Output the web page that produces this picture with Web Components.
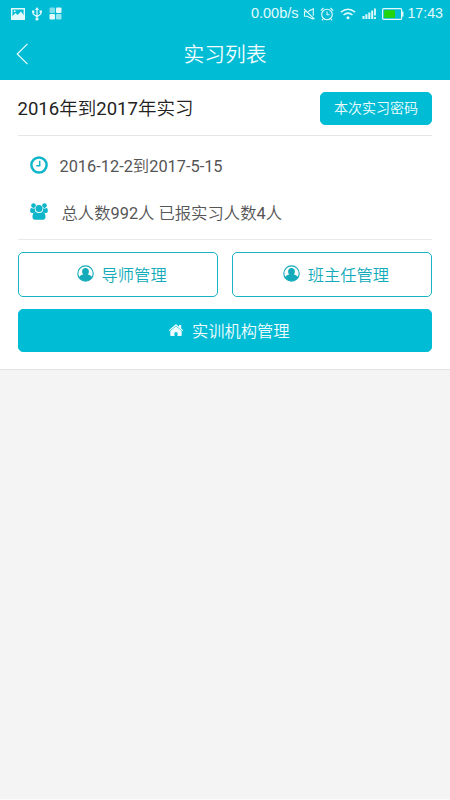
<!DOCTYPE html>
<html lang="zh-CN">
<head>
<meta charset="utf-8">
<title>实习列表</title>
<style>
html,body{margin:0;height:100%}
body{background:#f4f4f4;font-family:Roboto,"Noto Sans CJK SC",sans-serif;font-weight:350;overflow:hidden}
</style>
</head>
<body>
<internship-page></internship-page>
<script>
const define = (name, html) => customElements.define(name, class extends HTMLElement {
  constructor() {
    super();
    const t = document.createElement('template');
    t.innerHTML = html;
    this.attachShadow({mode: 'open'}).append(t.content.cloneNode(true));
  }
});

const icons = {
  clock: '<svg viewBox="0 0 18 18" width="18" height="18" fill="none" stroke="currentColor"><circle cx="9" cy="9" r="7.600" stroke-width="2.500"/><path d="M9.700 4.800V9.700H6.200" stroke-width="1.500"/></svg>',
  group: '<svg viewBox="0 0 18 17" width="18" height="17" fill="currentColor"><circle cx="3.500" cy="2.600" r="2.300"/><circle cx="14.500" cy="2.600" r="2.300"/><path d="M.2 8.200c0-2 .2-3.200 1.500-3.200 1 .7 2.300.8 3.300.2-.3 1.800 0 2.900.9 3.900-1 .1-1.800.4-2.400 1C1.400 10.100.2 9.600.2 8.200ZM17.800 8.200c0-2-.2-3.200-1.500-3.200-1 .7-2.300.8-3.300.2.3 1.800 0 2.900-.9 3.900 1 .1 1.800.4 2.400 1 2.100 0 3.300-.5 3.300-1.900Z"/><circle cx="9" cy="5.400" r="3.500"/><path d="M2.500 14c0-2.800.8-4.900 3.100-4.900 2.100 1.300 4.700 1.300 6.800 0 2.300 0 3.100 2.100 3.100 4.900 0 1.700-1 2.700-2.600 2.700H5.100c-1.600 0-2.600-1-2.600-2.700Z"/></svg>',
  user: '<svg viewBox="0 0 17 17" width="17" height="17"><circle cx="8.500" cy="8.500" r="7.700" fill="none" stroke="currentColor" stroke-width="1.150"/><path fill="currentColor" d="M8.500 2.900c2.100 0 3.400 1.500 3.400 3.500 0 1.200-.5 2.300-1.300 3 2.100.3 3.600 1.200 4.500 2.800A7.600 7.600 0 0 1 1.900 12.200c.9-1.600 2.400-2.500 4.500-2.800-.8-.7-1.300-1.800-1.300-3 0-2 1.300-3.500 3.400-3.500Z"/></svg>',
  home: '<svg viewBox="0 0 16 14" width="16" height="14" fill="currentColor"><path d="M8 3.300 13.700 8v4.300q0 .7-.7.700H9.500V9.300h-3V13H3q-.7 0-.7-.7V8Z"/><path d="M.8 7.200 7.400 1.600q.6-.5 1.200 0L11 3.700V1.900h2.200v3.600l2 1.700-.7.900L8 2.700 1.500 8.100Z"/></svg>'
};
customElements.define('app-icon', class extends HTMLElement {
  connectedCallback() {
    if (!this.shadowRoot) this.attachShadow({mode: 'open'});
    this.shadowRoot.innerHTML = `<style>:host{display:inline-flex;flex:none}svg{display:block}</style>${icons[this.getAttribute('name')] || ''}`;
  }
});

define('status-bar', `
<style>
:host{display:flex;justify-content:space-between;height:27px;color:#e3fafd;box-sizing:border-box;padding:0 7px 0 11px;font:14.500px/27px "Liberation Sans",sans-serif}
.left,.right{display:flex;align-items:center}
svg{display:block;flex:none}
</style>
<div class="left">
<svg width="14" height="12" viewBox="0 0 14 12" style="margin-right:7px"><path fill="none" stroke="currentColor" stroke-width="1.400" d="M.7.7h12.600v10.600H.7Z"/><path fill="currentColor" d="M1 11V8.500L4.500 5l2 2L10 3.500l3 4V11Z"/><circle cx="3.600" cy="3.300" r="1" fill="currentColor"/></svg>
<svg width="10" height="14" viewBox="0 0 10 14" fill="none" stroke="currentColor" stroke-width="1.200" style="margin-right:7px"><path d="M5 2v10M1.200 4.500V7L5 9.800 8.800 7V4.500"/><path fill="currentColor" stroke="none" d="m5 0 2 3H3ZM0 3.500h2.400v2.200H0Zm7.600 0H10v2.200H7.600Z"/><circle cx="5" cy="12" r="1.600" fill="currentColor" stroke="none"/></svg>
<svg width="13" height="13" viewBox="0 0 13 13" fill="currentColor"><rect x=".5" y=".5" width="5.500" height="5.500" rx="1" opacity=".55"/><rect x="7" y=".5" width="5.500" height="5.500" rx="1"/><rect x=".5" y="7" width="5.500" height="5.500" rx="1"/><rect x="7" y="7" width="5.500" height="5.500" rx="1" opacity=".65"/></svg>
</div>
<div class="right">
<span style="margin-right:5px">0.00b/s</span>
<svg width="13" height="12" viewBox="0 0 13 12" fill="none" stroke="currentColor" stroke-width="1.100" style="margin-right:4px"><path d="M1 1l10.500 10.200M5.200 3.500 10.300.8v7M3.200 3.800H1.500v4.400H4.200L10.300 11.300"/></svg>
<svg width="14" height="14" viewBox="0 0 14 14" fill="none" stroke="currentColor" stroke-width="1.100" style="margin-right:6px"><circle cx="7" cy="7.500" r="5.300"/><path d="M7 4.500v3.300h2.500M.8 3.600 3.500 1M13.200 3.600 10.500 1M3 12l-1 1.300M11 12l1 1.300"/></svg>
<svg width="16" height="12" viewBox="0 0 16 12" fill="none" stroke="currentColor" stroke-width="1.500" style="margin-right:6px"><path d="M.8 4.300Q8-1.800 15.200 4.300M3.500 7Q8 3.300 12.500 7"/><circle cx="8" cy="9.800" r="1.500" fill="currentColor" stroke="none"/></svg>
<svg width="14" height="12" viewBox="0 0 14 12" fill="currentColor" style="margin-right:6px"><path d="M.5 8h2v3H.5ZM3.400 6.300h2V11h-2ZM6.300 4.500h2V11h-2ZM9.200 2.500h2V11h-2ZM12.100.5h1.800v7h-1.800ZM12.100 9h1.800v2h-1.800Z"/></svg>
<svg width="22" height="12" viewBox="0 0 22 12" style="margin-right:3px"><rect x=".6" y=".6" width="19" height="10.800" rx="1" fill="none" stroke="currentColor" stroke-width="1.200"/><rect x="2.200" y="2.200" width="10.800" height="7.600" fill="#22d40a"/><path d="M20.700 3.500v5" stroke="currentColor" stroke-width="1.500"/></svg>
<span style="font-size:14.200px">17:43</span>
</div>`);

define('nav-bar', `
<style>
:host{display:grid;grid-template-columns:50px 1fr 50px;align-items:center;height:53px;color:#effdff;font-size:20.800px;line-height:30px;text-align:center}
svg{display:block;margin-left:16px}
span{padding-top:2px}
</style>
<svg width="13" height="22" viewBox="0 0 13 22" fill="none" stroke="currentColor" stroke-width="1.150"><path d="M11.500.8 1.200 11l10.300 10.200"/></svg>
<span><slot></slot></span>`);

define('info-row', `
<style>
:host{display:flex;align-items:center;height:47px;padding-left:12px;color:#555;font-size:16.350px}
span{padding-bottom:2px}
</style>
<slot name="icon"></slot><span><slot></slot></span>`);

define('action-button', `
<style>
:host{display:flex;align-items:center;justify-content:center;box-sizing:border-box;border:1px solid #18b3c2;border-radius:5px;color:#13abba;font-size:16.300px;gap:8px;background:#fff;white-space:nowrap}
:host([filled]){background:#00bcd5;border-color:#00bcd5;color:#effdff}
</style>
<slot></slot>`);

define('internship-card', `
<style>
:host{display:block;box-sizing:border-box;height:290px;padding:0 18px 0 17.500px;background:#fff;border-bottom:1px solid #e3e3e3}
header{display:flex;align-items:center;justify-content:space-between;height:54px;padding-top:1px;border-bottom:1px solid #e6e6e6;font-size:18.550px;color:#222}
header>span{padding-bottom:3px}
header action-button{width:112px;height:33px;font-size:14px;padding-bottom:2px}
i{font-style:normal;font-weight:400}
.info{height:104px;padding-top:6px;box-sizing:border-box;border-bottom:1px solid #e9e9e9}
.info app-icon{color:#0fb5c9;position:relative;top:-1px}
.pair{display:grid;grid-template-columns:1fr 1fr;gap:14px;margin:12px 0}
.pair action-button{height:45px;padding:0 0 2px 8px}
.wide{height:43px;padding:0 0 2px 8px}
</style>
<header><span><i>2016</i>年到<i>2017</i>年实习</span><action-button filled>本次实习密码</action-button></header>
<div class="info">
<info-row><app-icon slot="icon" name="clock" style="margin-right:12px"></app-icon><i>2016-12-2</i>到<i>2017-5-15</i></info-row>
<info-row><app-icon slot="icon" name="group" style="margin:0 13.500px 0 .500px"></app-icon>总人数<i>992</i>人 已报实习人数<i>4</i>人</info-row>
</div>
<div class="pair">
<action-button><app-icon name="user"></app-icon><span>导师管理</span></action-button>
<action-button><app-icon name="user"></app-icon><span>班主任管理</span></action-button>
</div>
<action-button class="wide" filled><app-icon name="home"></app-icon><span>实训机构管理</span></action-button>`);

define('internship-page', `
<style>
:host{display:block;height:100vh;box-sizing:border-box;border-bottom:1px solid #fafafa}
.top{background:#00bcd5}
</style>
<div class="top"><status-bar></status-bar><nav-bar>实习列表</nav-bar></div>
<internship-card></internship-card>`);
</script>
</body>
</html>
